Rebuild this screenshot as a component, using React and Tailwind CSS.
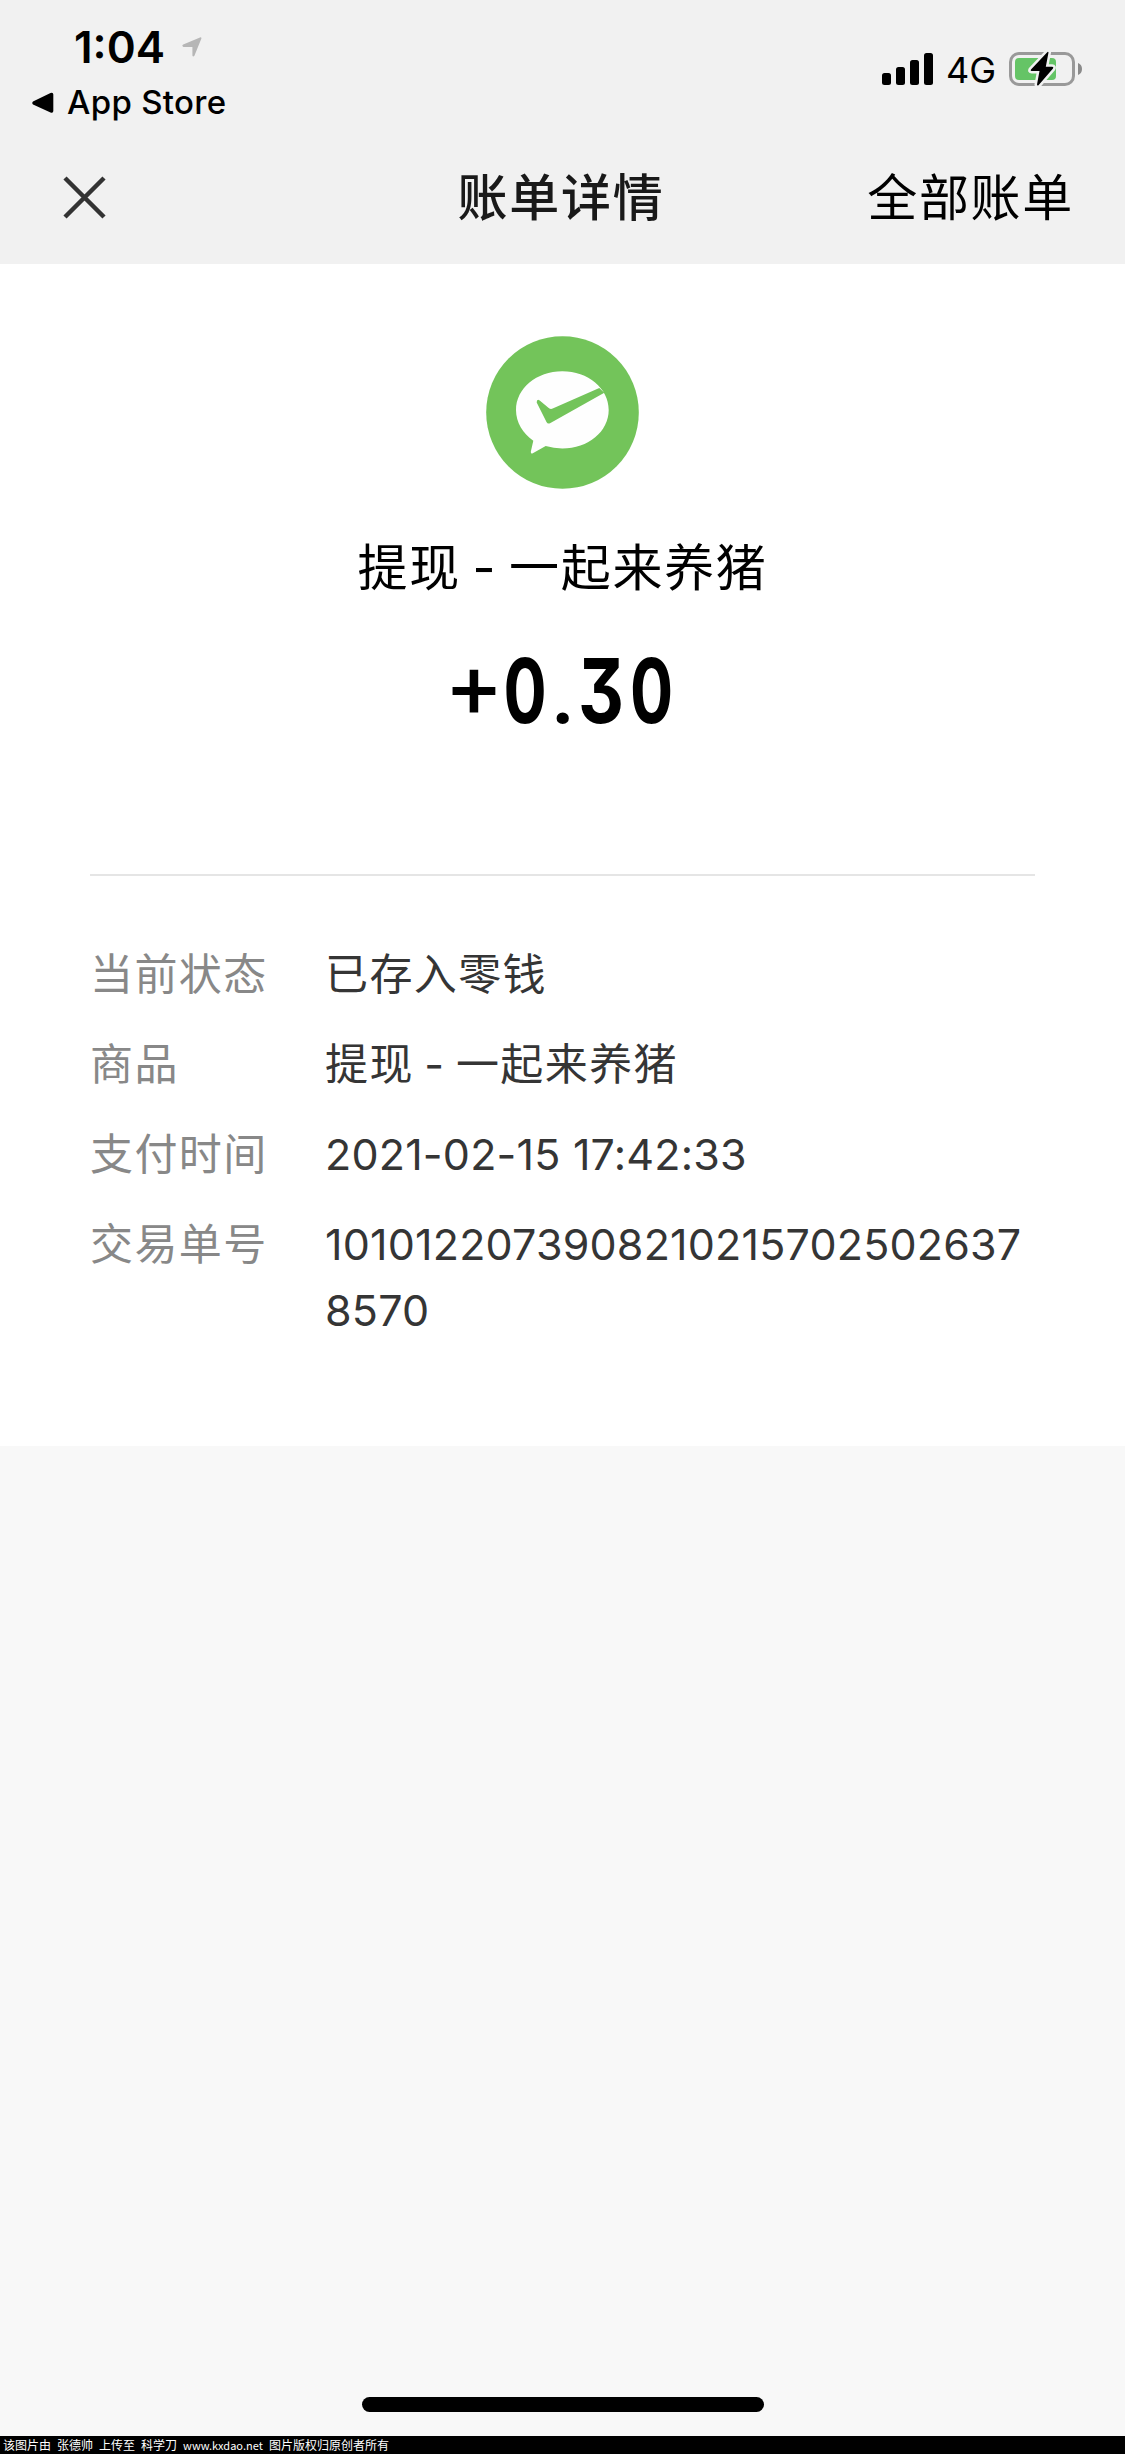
const DETAILS = [
  { label: "当前状态", value: "已存入零钱", tracking: "tracking-[1.400px]" },
  { label: "商品", value: "提现 - 一起来养猪", tracking: "tracking-[1.400px] [word-spacing:-3px]" },
  { label: "支付时间", value: "2021-02-15 17:42:33", tracking: "tracking-[0.200px]" },
  { label: "交易单号", value: "1010122073908210215702502637 8570", tracking: "tracking-[0.200px]" },
];

function LocationArrow() {
  return (
    <svg viewBox="0 0 20 20" className="h-5 w-5">
      <path d="M1.2 7.4 18 .4q1.8-.4 1.3 1.4L12.4 18.8q-1.4 1.6-2-.2V10H1.4Q-.6 8.600 1.200 7.400Z" fill="#b6b6b6" />
    </svg>
  );
}

function BackTriangle() {
  return (
    <svg viewBox="0 0 22 22" className="h-[22px] w-[22px]">
      <path d="M1 9.600 18.500 1Q21.300 0 21.300 2.500V19Q21.300 21.500 18.500 20.500L1 12.400Q-.5 11 1 9.600Z" fill="#000" />
    </svg>
  );
}

function Signal() {
  return (
    <svg viewBox="0 0 51 32" className="h-8 w-[51px]">
      <rect x="0" y="20" width="9" height="12" rx="2.500" />
      <rect x="14" y="14" width="9" height="18" rx="2.500" />
      <rect x="28" y="7" width="9" height="25" rx="2.500" />
      <rect x="42" y="0" width="9" height="32" rx="2.500" />
    </svg>
  );
}

function Battery() {
  const bolt = "M38.500 1 22 18.500q-1 1.500.7 1.500h7.800L28 33.500q.2 1.800 1.700.5L44 17.500q1-1.800-.8-1.800h-6.400L39.500 1.500Q39.300.4 38.500 1Z";
  return (
    <svg viewBox="0 0 74 36" className="h-9 w-[74px]">
      <rect x="1.500" y="2.500" width="63" height="31" rx="8.500" fill="none" stroke="#999" strokeWidth="3" />
      <rect x="6" y="7" width="41" height="22" rx="4" fill="#65c466" />
      <path d="M69 12q4 1.500 4 6t-4 6Z" fill="#8a8a8a" />
      <path d={bolt} fill="#f1f1f1" stroke="#f1f1f1" strokeWidth="5" strokeLinejoin="round" />
      <path d={bolt} fill="#000" />
    </svg>
  );
}

function PayLogo() {
  return (
    <svg viewBox="0 0 153 153" className="h-[153px] w-[153px]">
      <circle cx="76.500" cy="76.500" r="76.300" fill="#73c45a" />
      <path
        d="M76.300 35.300C50.500 35.300 30 52.500 30 74c0 12.500 6.800 23.500 17.300 30.700l-2.500 11q0 2.600 2 1.600L59.700 110q8 2.400 16.600 2.400c26 0 46.400-17 46.400-38.500S102 35.300 76.300 35.300Z"
        fill="#fefefe"
      />
      <path d="M50.700 66.500q0-4 3-2l9 7.500q1.800 1.400 4 .6L113.300 52l5 4.700L64 87.200q-2.400 1-3.500-1.200Z" fill="#73c45a" />
    </svg>
  );
}

function StatusBar() {
  return (
    <div className="flex h-[132px] justify-between text-black">
      <div className="pl-8 pt-[22px]">
        <div className="flex h-[50px] items-center pl-[42px]">
          <span className="w-[108px] text-[44px] font-semibold leading-[50px]">1:04</span>
          <LocationArrow />
        </div>
        <div className="mt-1.5 flex h-[50px] items-center gap-[13px]">
          <BackTriangle />
          <span className="text-[33px] font-medium tracking-[0.300px]">App Store</span>
        </div>
      </div>
      <div className="flex h-[138px] items-center pr-[42px]">
        <Signal />
        <span className="ml-[13px] w-[63px] pt-0.5 text-[36px] leading-none">4G</span>
        <Battery />
      </div>
    </div>
  );
}

function NavBar() {
  return (
    <div className="grid h-[132px] grid-cols-3 items-center pl-[57px] pr-[51px] pt-px">
      <svg viewBox="0 0 43 43" className="mb-[3px] ml-1.5 h-[43px] w-[43px]">
        <path d="M2 2 41 41M41 2 2 41" stroke="#333" strokeWidth="4.500" />
      </svg>
      <h1 className="pr-[9px] text-center text-[50px] font-medium tracking-[1.700px] text-[#191919]">账单详情</h1>
      <span className="text-right text-[50px] tracking-[1.700px] text-black">全部账单</span>
    </div>
  );
}

export default function App() {
  return (
    <div className="flex h-[2454px] w-[1125px] flex-col overflow-hidden bg-[#f8f8f8] font-['Inter','Noto_Sans_CJK_SC',sans-serif]">
      <header className="h-[264px] bg-[#f1f1f1]">
        <StatusBar />
        <NavBar />
      </header>

      <main className="h-[1182px] bg-white px-[90px] pt-[72px]">
        <div className="flex flex-col items-center">
          <PayLogo />
          <p className="mt-[43px] text-[50px] leading-[72px] tracking-[1.700px] text-black [word-spacing:-4px]">提现 - 一起来养猪</p>
          <div className="mt-[42px] flex h-[90px] items-baseline text-[89px] font-bold leading-[90px] text-black">
            <span className="flex w-[50px] -translate-y-1.5 justify-center font-medium">+</span>
            <span className="flex w-[52px] scale-x-[0.720] justify-center">0</span>
            <span className="flex w-6 justify-center font-['Roboto',sans-serif] font-medium">.</span>
            <span className="flex w-[52px] scale-x-[0.800] justify-center [font-feature-settings:'cv09']">3</span>
            <span className="flex w-[49px] scale-x-[0.720] justify-center">0</span>
          </div>
        </div>

        <dl className="mt-[138px] flex flex-col gap-6 border-t-2 border-[#e5e5e5] pt-[65px] text-[43px] leading-[66px]">
          {DETAILS.map((item) => (
            <div key={item.label} className="flex">
              <dt className="w-[235px] shrink-0 tracking-[1.400px] text-[#888]">{item.label}</dt>
              <dd className={`w-[710px] text-[#353535] ${item.tracking}`}>{item.value}</dd>
            </div>
          ))}
        </dl>
      </main>

      <div className="mt-auto flex justify-center pb-6">
        <div className="h-[15px] w-[402px] rounded-full bg-black" />
      </div>
      <footer className="flex h-[18px] items-center gap-1.5 bg-black pl-[3px] font-['Noto_Sans_CJK_SC',sans-serif] text-[12px] leading-[18px] text-white">
        <span>该图片由</span>
        <span>张德帅</span>
        <span>上传至</span>
        <span>科学刀</span>
        <span className="w-[80px] text-[11px]">www.kxdao.net</span>
        <span>图片版权归原创者所有</span>
      </footer>
    </div>
  );
}
